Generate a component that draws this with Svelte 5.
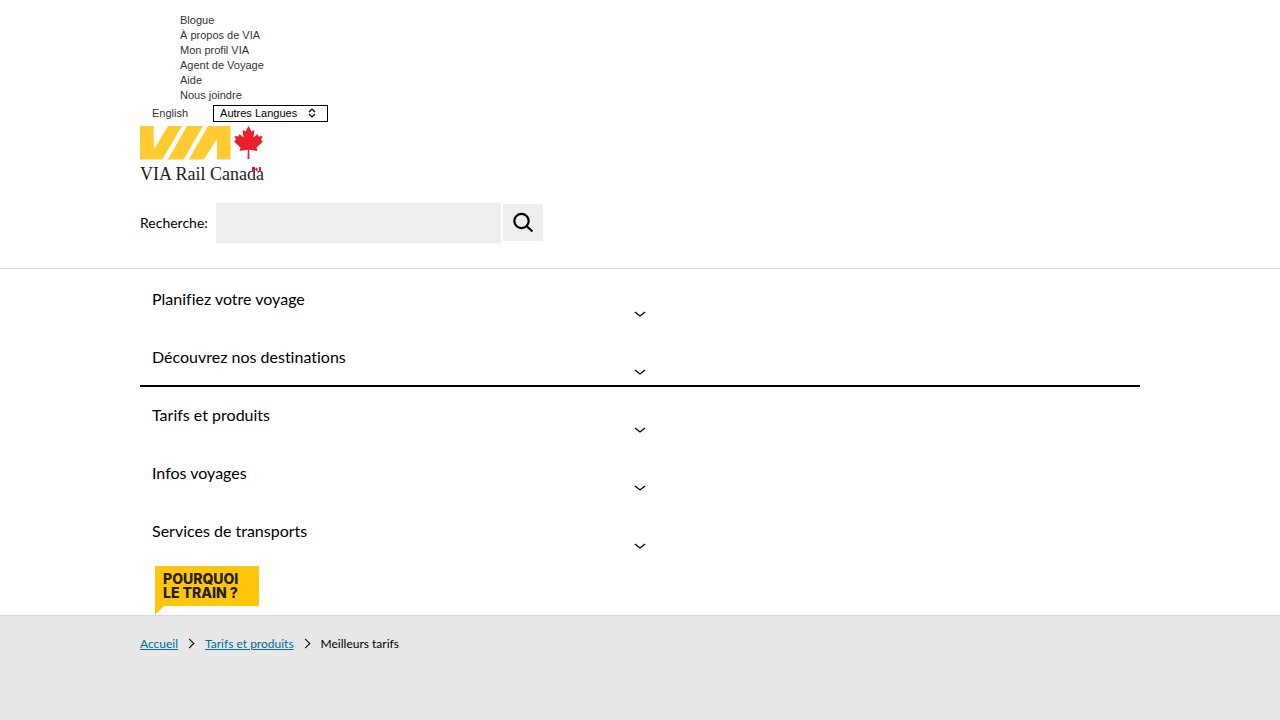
<script lang="ts">
  const topLinks = ['Blogue', 'À propos de VIA', 'Mon profil VIA', 'Agent de Voyage', 'Aide', 'Nous joindre'];

  const navItems = [
    { label: 'Planifiez votre voyage', current: false },
    { label: 'Découvrez nos destinations', current: true },
    { label: 'Tarifs et produits', current: false },
    { label: 'Infos voyages', current: false },
    { label: 'Services de transports', current: false },
  ];

  let query = $state('');
</script>

<div class="page">
  <header>
    <div class="container">
      <ul class="top-links">
        {#each topLinks as label (label)}
          <li><a href="#top">{label}</a></li>
        {/each}
      </ul>

      <div class="languages">
        <a href="#en" lang="en">English</a>
        <div class="select-wrap">
          <select aria-label="Autres Langues">
            <option>Autres Langues</option>
          </select>
          <svg class="sort" viewBox="0 0 8 10" aria-hidden="true">
            <path d="M1 4 L4 1 L7 4 M1 6 L4 9 L7 6" />
          </svg>
        </div>
      </div>

      <a class="logo" href="#accueil" aria-label="VIA Rail Canada">
        <svg viewBox="0 0 124 34" aria-hidden="true">
          <!-- yellow block cut by slanted rails -->
          <rect width="90.5" height="33.5" fill="#ffcb31" />
          <path
            fill="#fff"
            d="M13.500 0 H28 L14 23 Z M42 0 H47 L27.500 34 H22 Z M63 0 H68 L48.500 34 H43.500 Z M77 13 V34 H63.500 Z"
          />
          <path
            fill="#ea1f2d"
            d="M108.500 0 L111.500 5.500 L114.500 4 L113.500 11.500 L117.500 8 L118.500 10.500 L122.500 10 L121 14 L123 15.500 L116.500 21.500 L117.500 25 L109.200 23.800 L109.500 33 H107.500 L107.800 23.800 L99.500 25 L100.500 21.500 L94 15.500 L96 14 L94.500 10 L98.500 10.500 L99.500 8 L103.500 11.500 L102.500 4 L105.500 5.500 Z"
          />
        </svg>
        <span class="wordmark">VIA Rail Canada</span>
        <svg class="flag" viewBox="0 0 9 5" aria-hidden="true">
          <path fill="#ea1f2d" d="M0 0h2v5H0z M7 0h2v5H7z M4.500 0.500 L6 2 L5 4 H4 L3 2z" />
        </svg>
      </a>

      <form class="search" onsubmit={(e) => e.preventDefault()}>
        <label for="search">Recherche:</label>
        <input id="search" type="text" bind:value={query} />
        <button type="submit" aria-label="Rechercher">
          <svg viewBox="0 0 20 20" aria-hidden="true">
            <circle cx="8.500" cy="8" r="7.200" />
            <path d="M13.500 13 L19.500 18.500" />
          </svg>
        </button>
      </form>
    </div>
  </header>

  <nav class="container" aria-label="Menu principal">
    <ul class="menu">
      {#each navItems as item (item.label)}
        <li class:current={item.current}>
          <a href="#menu">
            <span>{item.label}</span>
            <svg viewBox="0 0 12 6" aria-hidden="true"><path d="M1 1 L6 5 L11 1" /></svg>
          </a>
        </li>
      {/each}
    </ul>
    <a class="why" href="#pourquoi">POURQUOI<br />LE TRAIN ?</a>
  </nav>

  <main>
    <ol class="container breadcrumb">
      <li><a href="#accueil">Accueil</a></li>
      <li><a href="#tarifs">Tarifs et produits</a></li>
      <li>Meilleurs tarifs</li>
    </ol>
  </main>
</div>

<style>
  :global(body) {
    background: #fff;
  }

  .page {
    display: flex;
    flex-direction: column;
    min-height: 100vh;
    color: #000;
    font-family: Lato, sans-serif;
    font-size: 16px;
    font-variant-ligatures: none;
  }

  .container {
    box-sizing: border-box;
    width: 100%;
    max-width: 1000px;
    margin: 0 auto;
  }

  ul,
  ol {
    margin: 0;
    padding: 0;
    list-style: none;
  }

  a {
    color: inherit;
    text-decoration: none;
  }

  svg {
    display: block;
    fill: none;
  }

  header {
    padding: 13px 0 25px;
    border-bottom: 1px solid #d9d9d9;
  }

  .top-links,
  .languages {
    color: #333;
    font: 11px/15px 'Liberation Sans', Arial, sans-serif;
  }

  .top-links {
    padding-left: 40px;
  }

  .languages {
    display: flex;
    align-items: center;
    gap: 25px;
    margin-top: 2px;
    padding-left: 12px;
  }

  .select-wrap {
    position: relative;
  }

  select {
    display: block;
    box-sizing: border-box;
    width: 115px;
    height: 17px;
    padding: 0 6px;
    border: 1px solid #000;
    border-radius: 0;
    background: #fff;
    color: #000;
    font: inherit;
    appearance: none;
  }

  .sort {
    position: absolute;
    top: 3px;
    right: 12px;
    width: 8px;
    height: 10px;
    stroke: #000;
    stroke-width: 1.2;
    pointer-events: none;
  }

  .logo {
    position: relative;
    display: block;
    width: 124px;
    margin-top: 4px;
  }

  .wordmark {
    display: block;
    height: 23px;
    color: #1c1c26;
    font: 18px/28px 'Liberation Serif', 'Times New Roman', serif;
    white-space: nowrap;
  }

  .flag {
    position: absolute;
    top: 41px;
    right: 3px;
    width: 9px;
    height: 5px;
  }

  .search {
    display: flex;
    align-items: center;
    margin-top: 20px;
    font-size: 14px;
  }

  .search label {
    margin-right: 8px;
    padding-bottom: 2px;
  }

  .search input {
    box-sizing: border-box;
    width: 285px;
    height: 40px;
    margin: 0 2px 0 0;
    padding: 0 10px;
    border: 0;
    background: #eee;
    font: inherit;
  }

  .search button {
    display: grid;
    place-items: center;
    width: 40px;
    height: 37px;
    margin-bottom: 1px;
    padding: 0;
    border: 0;
    background: #eee;
  }

  .search button svg {
    width: 20px;
    height: 20px;
    overflow: visible;
    stroke: #000;
    stroke-width: 2.2;
  }

  .menu {
    padding-top: 2px;
  }

  .menu li {
    box-sizing: border-box;
    height: 58px;
    border-bottom: 2px solid transparent;
  }

  .menu .current {
    border-bottom-color: #000;
  }

  .menu a {
    display: block;
    padding: 18px 12px 0;
    line-height: 20px;
  }

  .menu span {
    display: block;
  }

  .menu svg {
    width: 12px;
    height: 6px;
    margin: 2px auto 0;
    stroke: #000;
    stroke-width: 1.3;
  }

  .why {
    display: block;
    box-sizing: border-box;
    width: 104px;
    height: 49px;
    margin: 5px 0 0 15px;
    padding: 6px 8px;
    background: #ffc60b;
    clip-path: polygon(0 0, 100% 0, 100% 40px, 9px 40px, 0 49px);
    color: #231f20;
    font: 800 14px/14px Inter, sans-serif;
    white-space: nowrap;
  }

  main {
    flex: 1;
    border-top: 1px solid #d9d9d9;
    background: #e7e7e7;
  }

  .breadcrumb {
    display: flex;
    padding-top: 20px;
    font-size: 12px;
    line-height: 16px;
  }

  .breadcrumb li {
    display: flex;
    align-items: center;
  }

  .breadcrumb li + li::before {
    content: '';
    box-sizing: border-box;
    width: 7px;
    height: 7px;
    margin: 0 12px 2px 8px;
    border: solid #000;
    border-width: 1px 1px 0 0;
    transform: rotate(45deg);
  }

  .breadcrumb a {
    color: #006b9e;
    text-decoration: underline;
  }
</style>
